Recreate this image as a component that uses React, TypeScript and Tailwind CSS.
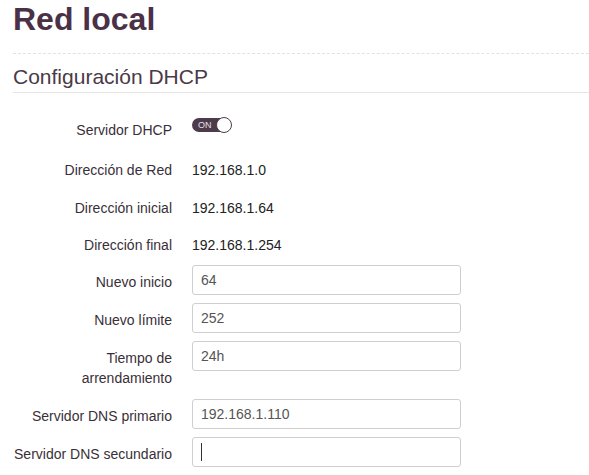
import React from "react";

const Row = ({ label, children, h = 30, mb = 8 }: { label: React.ReactNode; children?: React.ReactNode; h?: number; mb?: number }) => (
  <div className="flex" style={{ height: h, marginBottom: mb }}>
    <div className="w-[159px] shrink-0 text-right text-[14px] leading-[20px] pt-[7px] text-[#3a2f38]">{label}</div>
    <div className="ml-[20px] w-[269px] flex items-start">{children}</div>
  </div>
);

const Input = ({ value, cursor }: { value?: string; cursor?: boolean }) => (
  <div className="w-[269px] h-[30px] border border-[#cfcfcf] rounded-[3px] px-[8px] flex items-center text-[14px] text-[#555]">
    {value}
    {cursor && <span className="inline-block w-px h-[18px] bg-[#333]" />}
  </div>
);

const Static = ({ value }: { value: string }) => (
  <div className="pt-[7px] text-[14px] leading-[20px] text-[#222]">{value}</div>
);

export default function App() {
  return (
    <div className="w-[589px] h-[475px] bg-white overflow-hidden" style={{ fontFamily: '"Liberation Sans", Arial, sans-serif' }}>
      <div className="pl-[13px]">
        <h1 className="text-[32px] font-bold leading-[36px] pt-[1px] text-[#4b3147] h-[53px]">Red local</h1>
        <div className="border-t border-dashed border-[#e2e2e2]" />
        <h2 className="text-[21px] leading-[24px] text-[#4a3a48] pt-[11px] h-[38px]">Configuración DHCP</h2>
        <div className="border-t border-[#e6e6e6]" />
        <div className="pt-[20px]">
          <Row label="Servidor DHCP" mb={10}>
            <div className="mt-[4px] relative w-[40px] h-[16px]">
              <div className="absolute left-0 top-[1px] w-[36px] h-[14px] rounded-full bg-[#4d3a4b] flex items-center pl-[6px]">
                <span className="text-[9px] leading-none text-[#e8e0e6]">ON</span>
              </div>
              <div className="absolute right-0 top-0 w-[16px] h-[16px] rounded-full bg-white border-[1.5px] border-[#4d3a4b]" />
            </div>
          </Row>
          <Row label="Dirección de Red" h={31} mb={7}><Static value="192.168.1.0" /></Row>
          <Row label="Dirección inicial" mb={7}><Static value="192.168.1.64" /></Row>
          <Row label="Dirección final" mb={7}><Static value="192.168.1.254" /></Row>
          <Row label="Nuevo inicio"><Input value="64" /></Row>
          <Row label="Nuevo límite"><Input value="252" /></Row>
          <Row label={<>Tiempo de<br />arrendamiento</>} h={50}><Input value="24h" /></Row>
          <Row label="Servidor DNS primario"><Input value="192.168.1.110" /></Row>
          <Row label="Servidor DNS secundario"><Input cursor /></Row>
        </div>
      </div>
    </div>
  );
}
